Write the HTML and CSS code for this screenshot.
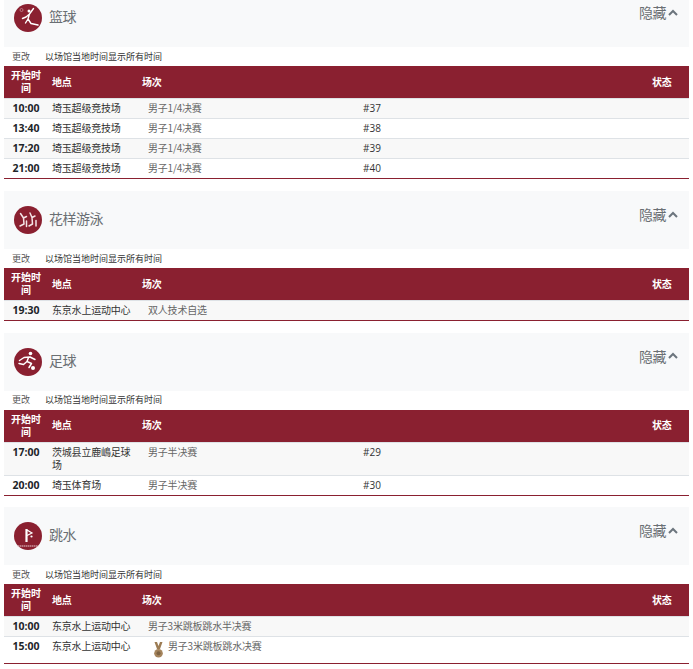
FILE: index.html
```html
<!DOCTYPE html>
<html lang="zh">
<head>
<meta charset="utf-8">
<title>赛程</title>
<link rel="stylesheet" href="styles.css">
</head>
<body>
<main class="page">
  <section class="sport">
    <header class="sport-head">
      <div class="sport-name">
        <svg class="pict" viewBox="0 0 28 28"><circle cx="14" cy="14" r="14" fill="#8a2030"/><circle cx="7.500" cy="6" r="1.500" fill="none" stroke="#d8a8b0" stroke-width=".6"/><circle cx="15" cy="7" r="1.500" fill="#fff"/><path d="M19.500 4.500 15.500 10 12 13 8.500 14.500M15.500 10 14 15 17 19.500 24 21M14 15 11.500 19" fill="none" stroke="#fff" stroke-width="1.400" stroke-linecap="round" stroke-linejoin="round"/></svg>
        <h2 class="sport-title">篮球</h2>
      </div>
      <button class="toggle">隐藏<svg class="chev" viewBox="0 0 10 7"><path d="M1 6 5 2l4 4" fill="none" stroke="#6c757d" stroke-width="2"/></svg></button>
    </header>
    <p class="meta"><a class="meta-change">更改</a><span>以场馆当地时间显示所有时间</span></p>
    <table class="schedule">
      <colgroup><col class="c-time"><col class="c-venue"><col class="c-event"><col class="c-num"><col class="c-status"></colgroup>
      <thead><tr><th class="t-time">开始时间</th><th>地点</th><th>场次</th><th></th><th>状态</th></tr></thead>
      <tbody>
        <tr><td class="t-clock">10:00</td><td>埼玉超级竞技场</td><td class="t-event">男子1/4决赛</td><td class="t-num">#37</td><td></td></tr>
        <tr><td class="t-clock">13:40</td><td>埼玉超级竞技场</td><td class="t-event">男子1/4决赛</td><td class="t-num">#38</td><td></td></tr>
        <tr><td class="t-clock">17:20</td><td>埼玉超级竞技场</td><td class="t-event">男子1/4决赛</td><td class="t-num">#39</td><td></td></tr>
        <tr><td class="t-clock">21:00</td><td>埼玉超级竞技场</td><td class="t-event">男子1/4决赛</td><td class="t-num">#40</td><td></td></tr>
      </tbody>
    </table>
  </section>

  <section class="sport">
    <header class="sport-head">
      <div class="sport-name">
        <svg class="pict" viewBox="0 0 28 28"><circle cx="14" cy="14" r="14" fill="#8a2030"/><g fill="none" stroke="#f3e4e6" stroke-width="1.500" stroke-linecap="round" stroke-linejoin="round"><path d="M6.500 7.500 9.500 12 10 18 6 20M12.500 10.500 9.500 12"/><path d="M16 7 18 11.500 18.500 18 15 20M21 10 18 11.500"/><path d="M12.500 15 12.500 20.500M22 14.500 22 20"/></g></svg>
        <h2 class="sport-title">花样游泳</h2>
      </div>
      <button class="toggle">隐藏<svg class="chev" viewBox="0 0 10 7"><path d="M1 6 5 2l4 4" fill="none" stroke="#6c757d" stroke-width="2"/></svg></button>
    </header>
    <p class="meta"><a class="meta-change">更改</a><span>以场馆当地时间显示所有时间</span></p>
    <table class="schedule">
      <colgroup><col class="c-time"><col class="c-venue"><col class="c-event"><col class="c-num"><col class="c-status"></colgroup>
      <thead><tr><th class="t-time">开始时间</th><th>地点</th><th>场次</th><th></th><th>状态</th></tr></thead>
      <tbody>
        <tr><td class="t-clock">19:30</td><td>东京水上运动中心</td><td class="t-event">双人技术自选</td><td></td><td></td></tr>
      </tbody>
    </table>
  </section>

  <section class="sport">
    <header class="sport-head">
      <div class="sport-name">
        <svg class="pict" viewBox="0 0 28 28"><circle cx="14" cy="14" r="14" fill="#8a2030"/><circle cx="16.500" cy="5.500" r="1.800" fill="#fff"/><circle cx="19" cy="20" r="2" fill="#fff"/><path d="M5.500 12.500 10 9.500 16 9 21 11.500M14.500 9.500 13 13.500 17.500 15.500 15 19.500M13 13.500 9.500 16.500 5 15.500" fill="none" stroke="#fff" stroke-width="1.500" stroke-linecap="round" stroke-linejoin="round"/></svg>
        <h2 class="sport-title">足球</h2>
      </div>
      <button class="toggle">隐藏<svg class="chev" viewBox="0 0 10 7"><path d="M1 6 5 2l4 4" fill="none" stroke="#6c757d" stroke-width="2"/></svg></button>
    </header>
    <p class="meta"><a class="meta-change">更改</a><span>以场馆当地时间显示所有时间</span></p>
    <table class="schedule">
      <colgroup><col class="c-time"><col class="c-venue"><col class="c-event"><col class="c-num"><col class="c-status"></colgroup>
      <thead><tr><th class="t-time">开始时间</th><th>地点</th><th>场次</th><th></th><th>状态</th></tr></thead>
      <tbody>
        <tr><td class="t-clock">17:00</td><td>茨城县立鹿嶋足球场</td><td class="t-event">男子半决赛</td><td class="t-num">#29</td><td></td></tr>
        <tr><td class="t-clock">20:00</td><td>埼玉体育场</td><td class="t-event">男子半决赛</td><td class="t-num">#30</td><td></td></tr>
      </tbody>
    </table>
  </section>

  <section class="sport">
    <header class="sport-head">
      <div class="sport-name">
        <svg class="pict" viewBox="0 0 28 28"><circle cx="14" cy="14" r="14" fill="#8a2030"/><path d="M12.500 7v13" fill="none" stroke="#fff" stroke-width="2.200"/><path d="M13 8 18 11 13 13.500" fill="none" stroke="#fff" stroke-width="1.200"/><circle cx="17.500" cy="14.500" r="1.100" fill="#fff"/><path d="M3.500 24h21" stroke="#e8ccd0" stroke-width="1" stroke-dasharray="1.500 .5"/></svg>
        <h2 class="sport-title">跳水</h2>
      </div>
      <button class="toggle">隐藏<svg class="chev" viewBox="0 0 10 7"><path d="M1 6 5 2l4 4" fill="none" stroke="#6c757d" stroke-width="2"/></svg></button>
    </header>
    <p class="meta"><a class="meta-change">更改</a><span>以场馆当地时间显示所有时间</span></p>
    <table class="schedule">
      <colgroup><col class="c-time"><col class="c-venue"><col class="c-event"><col class="c-num"><col class="c-status"></colgroup>
      <thead><tr><th class="t-time">开始时间</th><th>地点</th><th>场次</th><th></th><th>状态</th></tr></thead>
      <tbody>
        <tr><td class="t-clock">10:00</td><td>东京水上运动中心</td><td class="t-event">男子3米跳板跳水半决赛</td><td></td><td></td></tr>
        <tr><td class="t-clock">15:00</td><td>东京水上运动中心</td><td class="t-event t-medal"><span class="medal-wrap"><svg class="medal" viewBox="0 0 9 16"><path d="M.5 0h2.500L4.500 4 6 0h2.500L6 7H3z" fill="#9c7c54"/><circle cx="4.500" cy="11.200" r="4.300" fill="#a5845c"/><circle cx="4.500" cy="11.200" r="2" fill="#7d6242"/></svg>男子3米跳板跳水决赛</span></td><td></td><td></td></tr>
      </tbody>
    </table>
  </section>
</main>
</body>
</html>
```
FILE: styles.css
```css
* { box-sizing: border-box; }
html, body { margin: 0; padding: 0; background: #fff; }
body {
  font-family: "Noto Sans CJK SC", "Open Sans", sans-serif;
  color: #333;
  overflow: hidden;
}
.page { padding: 0 4px; margin-top: -10.6px; }
.sport { margin-bottom: 11.6px; }
.sport-head {
  display: flex;
  justify-content: space-between;
  align-items: flex-start;
  height: 58px;
  background: #f8f9fa;
  padding: 15px 10px 0 10px;
}
.sport-name { display: flex; align-items: flex-start; gap: 7px; }
.pict { width: 28px; height: 28px; display: block; }
.sport-title {
  margin: 2px 0 0;
  font-size: 14px;
  line-height: 20px;
  font-weight: 400;
  letter-spacing: -.5px;
  color: #6a6f73;
}
.toggle {
  display: flex;
  align-items: center;
  gap: 2px;
  margin: -2px 1px 0 0;
  padding: 0;
  border: 0;
  background: none;
  font: inherit;
  font-size: 14px;
  line-height: 20px;
  letter-spacing: -.5px;
  color: #6a6f73;
}
.chev { width: 10px; height: 7px; display: block; }
.meta {
  display: flex;
  margin: 0;
  height: 19px;
  padding-left: 8px;
  align-items: center;
  font-size: 9px;
  line-height: 12px;
}
.meta-change { width: 33px; color: #555; }
.schedule {
  width: 100%;
  table-layout: fixed;
  border-collapse: separate;
  border-spacing: 0;
  font-size: 10px;
  line-height: 13px;
  letter-spacing: -.2px;
}
.c-time { width: 44px; }
.c-venue { width: 90px; }
.c-event { width: 221px; }
.c-num { width: 289px; }
.c-status { width: 41px; }
.schedule th {
  background: #8a2030;
  color: #fff;
  font-weight: 700;
  text-align: left;
  padding: 2px 4px 4px;
  border-bottom: 1px solid #dee2e6;
  vertical-align: middle;
}
.schedule th.t-time { text-align: center; letter-spacing: 0; }
.schedule td {
  padding: 2px 4px 4px;
  border-bottom: 1px solid #dee2e6;
  vertical-align: top;
  color: #333;
}
.schedule tbody tr:nth-child(odd) td { background: #f8f8f8; }
.schedule tbody tr:last-child td { border-bottom-color: #8a2030; }
.schedule td.t-clock {
  padding: 3px 4px;
  text-align: center;
  font-family: "Open Sans", sans-serif;
  font-weight: 700;
  font-size: 10.5px;
  letter-spacing: 0;
  color: #212529;
}
.schedule td.t-num {
  padding: 3px 4px;
  font-family: "Open Sans", sans-serif;
  letter-spacing: 0;
}
.schedule td.t-event { padding-left: 10px; color: #666; }
.schedule td.t-medal { padding-left: 16px; padding-bottom: 5px; }
.medal-wrap { display: flex; align-items: flex-start; gap: 5px; }
.medal { width: 9px; height: 16px; margin-top: 3px; display: block; flex: none; }
```
